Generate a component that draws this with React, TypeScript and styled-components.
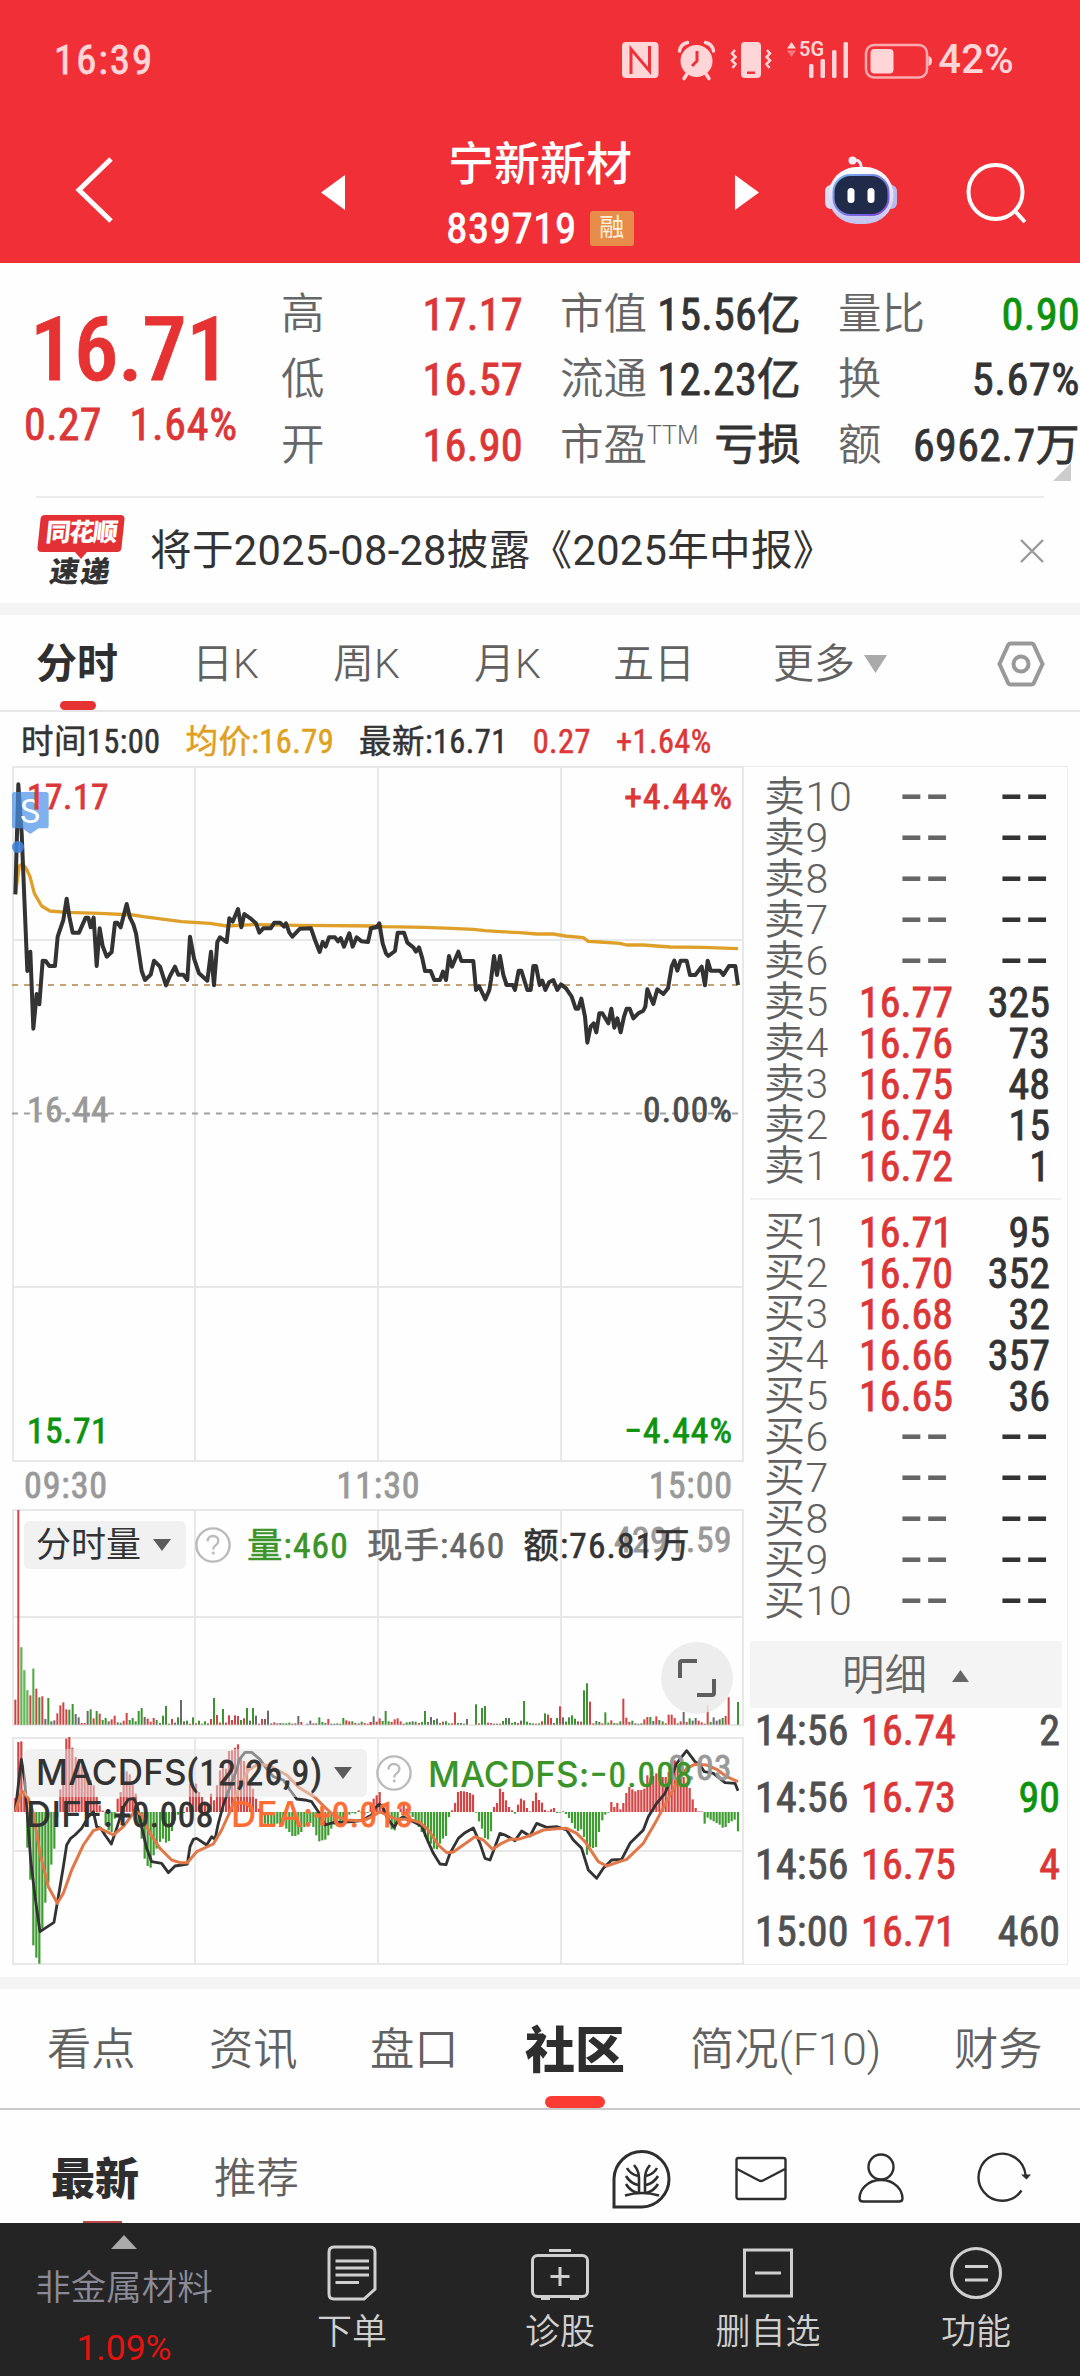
import React from 'react';
import styled, { createGlobalStyle, css } from 'styled-components';

const RED = '#dc3636';
const GREEN = '#0d930d';
const INK = '#333333';
const GREY = '#666666';

const GlobalStyle = createGlobalStyle`
  * { box-sizing: border-box; }
  body { margin: 0; background: #fff; }
`;

const Screen = styled.div`
  width: 1080px;
  height: 2376px;
  overflow: hidden;
  display: flex;
  flex-direction: column;
  background: #fefefe;
  color: ${INK};
  font-family: Roboto, 'Noto Sans CJK SC', sans-serif;
  font-size: 42px;
  line-height: 1;
  white-space: nowrap;
`;

const din = css`
  font-family: Roboto, 'Noto Sans CJK SC', sans-serif;
  font-stretch: 75%;
  font-weight: 400;
  -webkit-text-stroke: 0.8px currentColor;
`;

const Num = styled.span<{ $size: number; $color?: string; $track?: number; $weight?: number }>`
  ${din}
  font-size: ${p => p.$size}px;
  color: ${p => p.$color ?? 'inherit'};
  letter-spacing: ${p => p.$track ?? 0.2}px;
  font-weight: ${p => p.$weight ?? 400};
`;

/* ---------- header ---------- */
const Header = styled.header`
  height: 263px;
  background: #f12f37;
  color: #fff;
`;
const StatusBar = styled.div`
  height: 117px;
  padding: 3px 66px 0 54px;
  display: flex;
  align-items: center;
  justify-content: space-between;
  color: #ffd6d7;
`;
const StatusIcons = styled.div`
  display: flex;
  align-items: center;
  gap: 4px;
`;
const BatteryText = styled.span`
  font-size: 40px;
  font-weight: 500;
  letter-spacing: 0.3px;
`;
const TitleBar = styled.div`
  height: 146px;
  display: grid;
  grid-template-columns: 321px 24px 390px 24px 66px 72px 183px;
`;
const BackCell = styled.div`padding: 40px 0 0 74px;`;
const ArrowCell = styled.div`padding-top: 58px;`;
const RobotCell = styled.div`padding-top: 39px;`;
const SearchCell = styled.div`padding: 43px 0 0 67px;`;
const Stock = styled.div`
  display: flex;
  flex-direction: column;
  align-items: center;
  padding-top: 22px;
`;
const StockName = styled.div`
  font-size: 46px;
  line-height: 50px;
  font-weight: 500;
`;
const StockCode = styled.div`
  display: flex;
  align-items: center;
  gap: 13px;
  height: 36px;
  margin-top: 21px;
`;
const MarginTag = styled.span`
  width: 44px;
  height: 35px;
  border-radius: 3px;
  background: #e88d49;
  color: #fff0dc;
  font-size: 25px;
  line-height: 34px;
  text-align: center;
`;

/* ---------- quote ---------- */
const Quote = styled.section`
  height: 233px;
  display: grid;
  grid-template-columns: 281px 242px 37px 241px 37px 242px;
`;
const Last = styled.div`
  padding-top: 42px;
`;
const LastPrice = styled.div`
  height: 88px;
  padding-left: 30px;
  display: flex;
  align-items: center;
`;
const Change = styled.div`
  display: flex;
  gap: 28px;
  padding: 10px 0 0 24px;
`;
const Stats = styled.div`
  padding-top: 19px;
`;
const Stat = styled.div`
  height: 65.5px;
  display: flex;
  align-items: center;
  justify-content: space-between;
`;
const StatLabel = styled.span`
  font-size: 43.5px;
  color: ${GREY};
  font-weight: 350;
  line-height: 60px;
  sup { font-size: 25px; line-height: 1; vertical-align: 16px; font-weight: 300; }
`;
const Spacer = styled.div``;
const LastStats = styled(Stats)`
  position: relative;
`;
const Corner = styled.svg`
  position: absolute;
  right: 9px;
  top: 200px;
`;

/* ---------- news ---------- */
const News = styled.section`
  height: 107px;
  margin: 0 36px;
  border-top: 2px solid #ebebeb;
  display: flex;
  align-items: center;
`;
const NewsLogo = styled.div`
  width: 90px;
  display: flex;
  flex-direction: column;
  align-items: center;
`;
const LogoTop = styled.div`
  width: 84px;
  height: 37px;
  border-radius: 4px;
  background: #e33034;
  transform: skewX(-6deg);
  color: #fff;
  font-size: 25px;
  font-weight: 900;
  line-height: 36px;
  text-align: center;
  letter-spacing: -1.5px;
`;
const LogoBottom = styled.div`
  transform: skewX(-9deg);
  font-size: 29px;
  font-weight: 900;
  line-height: 28px;
  margin-top: -1px;
  letter-spacing: 2px;
`;
const NewsText = styled.div`
  flex: 1;
  padding-left: 24px;
  font-size: 41.6px;
  letter-spacing: 0.3px;
  line-height: 50px;
`;
const Band = styled.div`
  height: 12px;
  flex: none;
  background: #f4f4f4;
`;

/* ---------- period tabs ---------- */
const Periods = styled.nav`
  height: 97px;
  padding: 0 35px 0 36px;
  border-bottom: 2px solid #e6e6e6;
  display: grid;
  grid-template-columns: 156px 141px 141px 139px 160px 224px 1fr;
  align-items: stretch;
`;
const Period = styled.div<{ $on?: boolean }>`
  display: flex;
  align-items: center;
  gap: 9px;
  font-size: 41px;
  font-weight: ${p => (p.$on ? 700 : 350)};
  color: ${p => (p.$on ? '#2f2f2f' : '#616161')};
  padding-top: 4px;
  position: relative;
  svg { position: relative; top: -1px; }
`;
const PeriodMark = styled.i`
  position: absolute;
  left: 24px;
  bottom: 0;
  width: 36px;
  height: 9px;
  border-radius: 5px;
  background: #e53232;
`;
const Info = styled.div`
  height: 54px;
  padding: 6px 0 0 21px;
  display: flex;
  align-items: center;
  gap: 25px;
  ${din}
  -webkit-text-stroke: 0.5px currentColor;
  font-size: 32.5px;
  letter-spacing: 0.4px;
`;
const InfoItem = styled.span<{ $color?: string }>`
  color: ${p => p.$color ?? INK};
  line-height: 44px;
`;

/* ---------- market area ---------- */
const Market = styled.section`
  height: 1211px;
  display: flex;
`;
const Charts = styled.div`
  width: 744px;
  display: flex;
  flex-direction: column;
`;
const ChartBox = styled.div<{ $h: number }>`
  position: relative;
  height: ${p => p.$h}px;
  svg { display: block; }
`;
const Tag = styled.span<{ $x?: number; $r?: number; $y: number; $color: string; $size?: number }>`
  position: absolute;
  ${p => (p.$x !== undefined ? `left: ${p.$x}px;` : `right: ${p.$r}px;`)}
  top: ${p => p.$y}px;
  ${din}
  font-size: ${p => p.$size ?? 35.5}px;
  line-height: 36px;
  color: ${p => p.$color};
  letter-spacing: 0.5px;
`;
const PercentTag = styled(Tag)`
  letter-spacing: 1.1px;
`;
const FlagLetter = styled(Tag)`
  font-stretch: 100%;
  -webkit-text-stroke: 0;
`;
const Axis = styled.div`
  height: 47px;
  padding: 0 11px 0 24px;
  display: flex;
  align-items: center;
  justify-content: space-between;
`;
const Legend = styled.div<{ $y: number }>`
  position: absolute;
  left: 24px;
  top: ${p => p.$y}px;
  height: 48px;
  display: flex;
  align-items: center;
`;
const Picker = styled.div<{ $w: number }>`
  width: ${p => p.$w}px;
  height: 48px;
  margin-right: 9px;
  padding: 0 15px 0 12px;
  border-radius: 6px;
  background: rgba(227, 227, 227, 0.5);
  display: flex;
  align-items: center;
  justify-content: space-between;
  font-size: 35px;
  line-height: 51px;
`;
const LegendItem = styled.span<{ $ml: number; $color: string }>`
  margin-left: ${p => p.$ml}px;
  padding-top: 2px;
  color: ${p => p.$color};
  ${din}
  -webkit-text-stroke: 0.6px currentColor;
  font-size: 35.5px;
  line-height: 46px;
  letter-spacing: 1.1px;
`;
const Wide = styled.span`
  font-family: Inter, sans-serif;
  font-stretch: 100%;
  font-weight: 450;
  -webkit-text-stroke: 0;
  font-size: 35px;
  letter-spacing: 0.2px;
`;
const Expand = styled.div`
  position: absolute;
  left: 661px;
  top: 133px;
  width: 72px;
  height: 72px;
  border-radius: 50%;
  background: rgba(234, 234, 234, 0.88);
  display: flex;
  align-items: center;
  justify-content: center;
`;

/* ---------- order book ---------- */
const Book = styled.aside`
  width: 324px;
  height: 1199px;
  border: 1px solid #ececec;
  border-left: 0;
  padding-top: 9px;
`;
const Level = styled.div`
  height: 41px;
  padding: 0 17px 0 20px;
  display: grid;
  grid-template-columns: 95px 91px 1fr;
  align-items: center;
`;
const LevelName = styled.span`
  font-size: 41px;
  line-height: 43px;
  font-weight: 350;
  letter-spacing: 0.6px;
  color: #616161;
`;
const LevelValue = styled.span<{ $color: string }>`
  ${din}
  font-size: 42px;
  line-height: 41px;
  text-align: right;
  color: ${p => p.$color};
`;
const Dashes = styled(LevelValue)`
  font-family: Inter, sans-serif;
  font-size: 56px;
  font-stretch: 100%;
  -webkit-text-stroke: 0;
  position: relative;
  top: -3px;
`;
const BookRule = styled.div`
  height: 2px;
  margin: 12px 5px 11px 6px;
  background: #f1f1f1;
`;
const DetailHead = styled.div`
  height: 67px;
  margin: 20px 5px 0 6px;
  padding: 3px 0 0 92px;
  background: #f4f4f4;
  color: ${GREY};
  display: flex;
  align-items: center;
  gap: 25px;
  font-size: 42.5px;
  line-height: 60px;
  font-weight: 350;
`;
const Trade = styled.div`
  height: 67px;
  padding: 0 7px 22px 11px;
  display: grid;
  grid-template-columns: 106px 100px 1fr;
  align-items: center;
`;

/* ---------- content tabs ---------- */
const Tabs = styled.nav`
  height: 121px;
  padding-left: 47px;
  border-bottom: 2px solid #cacaca;
  display: grid;
  grid-template-columns: 162px 161px 155px 165px 264px 1fr;
`;
const TabItem = styled.div<{ $on?: boolean }>`
  position: relative;
  display: flex;
  align-items: center;
  padding-top: 4px;
  font-size: ${p => (p.$on ? 50 : 44.3)}px;
  font-weight: ${p => (p.$on ? 900 : 350)};
  color: ${p => (p.$on ? '#2e2e2e' : '#616161')};
`;
const TabMark = styled.i`
  position: absolute;
  left: 20px;
  bottom: 0;
  width: 60px;
  height: 12px;
  border-radius: 6px;
  background: #fb3c32;
`;
const Feed = styled.div`
  height: 113px;
  padding: 0 46px 0 51px;
  display: flex;
  justify-content: space-between;
`;
const FeedTabs = styled.div`
  display: flex;
  gap: 75px;
`;
const FeedTab = styled.div<{ $on?: boolean }>`
  position: relative;
  display: flex;
  align-items: center;
  padding-top: 26px;
  font-size: ${p => (p.$on ? 44 : 42.5)}px;
  font-weight: ${p => (p.$on ? 900 : 350)};
  color: ${p => (p.$on ? '#2e2e2e' : '#616161')};
`;
const FeedMark = styled.i`
  position: absolute;
  left: 32px;
  bottom: 0;
  width: 39px;
  height: 2px;
  background: #b94a4a;
`;
const FeedIcons = styled.div`
  display: flex;
  gap: 61px;
  padding-top: 37px;
`;

/* ---------- bottom bar ---------- */
const Bottom = styled.footer`
  height: 153px;
  background: #242424;
  display: grid;
  grid-template-columns: 248px 208px 208px 208px 208px;
`;
const Sector = styled.div`
  display: flex;
  flex-direction: column;
  align-items: center;
  padding-top: 12px;
  color: #8b8b98;
  font-size: 35.5px;
`;
const SectorName = styled.div`
  margin-top: 15px;
  line-height: 48px;
  font-weight: 350;
`;
const SectorChange = styled.div`
  margin-top: 19px;
  line-height: 34px;
  font-size: 35.5px;
  color: #e3140f;
`;
const Action = styled.div`
  display: flex;
  flex-direction: column;
  align-items: center;
  padding-top: 22px;
  color: #d0d0d0;
  font-size: 35px;
  font-weight: 350;
`;
const ActionText = styled.span`
  line-height: 48px;
  margin-top: 8px;
`;

/* ---------- data ---------- */
const SECOND = 1110;
type P = string;
const shift = (s: P) =>
  s.trim().split(/\s+/).map(t => {
    const [x, y] = t.split(',').map(Number);
    return `${x + SECOND},${y}`;
  }).join(' ');

const PRICE =
  '46,463 55,133 65,280 82,693 91,635 100,866 110,762 118,793 128,662 137,663 148,678 165,678 173,590 190,540 200,476 208,530 218,578 237,578 257,533 265,533 272,562 281,533 290,678 299,565 308,618 320,650 335,636 345,548 352,548 362,562 380,492 390,533 400,553 408,580 425,693 435,720 452,704 462,662 480,680 498,736 510,708 525,680 535,704 550,704 562,720 570,590 582,655 597,700 622,722 633,635 642,736 652,606 660,592 680,606 688,535 698,545 714,507 724,562 733,522 751,535 768,550 778,578 790,565 812,565 823,548 840,548 852,560 858,550 868,578 877,590 900,566 933,565 945,600 959,636 968,606 977,620 987,592 1005,592 1014,604 1022,594 1032,620 1048,580 1058,620 1070,592 1085,604 1104,606 1113,565 1130,560 ' +
  shift('2,565 20,562 28,550 38,610 48,640 55,648 75,633 83,578 102,578 112,608 130,622 138,635 147,622 157,655 165,693 182,693 193,720 210,720 219,695 228,720 237,648 246,680 265,635 274,663 310,663 318,750 327,738 346,778 358,750 363,720 372,648 381,705 390,648 400,705 410,735 428,735 435,750 446,692 454,692 472,750 482,750 490,678 498,678 509,735 517,722 526,750 537,727 550,720 562,750 573,733 588,745 605,770 617,806 625,806 634,776 645,830 652,908 662,860 671,850 679,877 688,820 697,820 715,850 724,806 733,863 742,835 752,877 762,830 770,806 779,806 790,835 805,820 820,812 826,800 832,748 850,792 862,748 880,762 894,745 905,680 913,662 922,692 932,662 950,662 960,705 976,705 995,680 1005,736 1013,662 1022,692 1050,692 1060,705 1077,678 1096,678 1104,735');
const AVERAGE =
  '46,463 58,378 68,372 78,384 90,410 103,460 125,498 150,513 200,517 300,520 400,525 430,530 545,545 630,550 680,558 760,554 900,556 1130,558 ' +
  shift('40,560 165,562 245,565 310,568 345,572 390,575 450,578 500,582 550,582 585,588 640,593 655,604 690,606 750,610 770,615 820,615 900,621 1000,622 1104,626');
const DIFF =
  '46,272 64,118 74,180 82,285 92,420 105,530 120,635 162,607 175,530 190,440 200,375 212,355 225,345 245,325 265,290 280,275 290,320 302,325 315,345 334,372 350,325 370,262 385,238 402,236 412,260 425,320 440,385 455,425 485,430 505,458 525,438 562,432 570,380 580,358 590,355 620,375 635,350 645,358 655,310 670,255 690,200 710,150 718,118 735,97 755,97 780,118 795,140 820,170 850,180 870,210 890,237 915,240 935,245 955,275 975,315 1000,308 1060,305 1090,300 1105,290 ' +
  shift('5,285 15,265 28,252 40,265 55,300 73,322 85,300 100,290 115,300 130,305 155,318 170,355 190,400 210,432 228,434 240,400 265,355 285,338 310,324 330,370 345,415 360,420 375,380 390,340 405,345 435,362 455,333 480,348 500,310 530,322 560,320 590,330 610,360 635,385 655,450 680,475 700,445 725,420 755,418 780,370 820,330 835,290 860,250 885,220 905,170 920,130 950,92 975,125 990,135 1003,155 1030,160 1065,188 1095,190 1104,212');
const DEA =
  '46,272 66,212 85,235 100,280 120,400 145,500 172,550 190,520 215,450 250,375 280,332 300,325 340,345 370,320 405,273 425,285 450,340 480,385 515,420 540,428 562,428 590,395 640,372 665,330 690,275 715,210 745,150 775,132 810,138 860,165 900,205 945,232 975,262 1000,285 1040,300 1080,302 1100,298 ' +
  shift('5,290 30,276 50,285 80,298 120,298 150,308 175,330 205,375 230,398 250,396 280,375 315,350 340,360 368,388 395,370 420,358 445,358 485,345 520,330 560,326 590,325 620,340 645,365 665,395 685,425 710,438 740,428 770,418 820,370 855,310 895,235 925,180 950,145 975,133 1010,135 1040,148 1070,170 1104,185');

const VOL_A =
  '46:75r 55:644r 64:232g 73:163g 82:103g 91:88r 100:168g 109:108r 118:82g 127:85r 136:17k 145:80g 154:10k 163:13k 172:34r 181:58r 190:67r 199:46r 208:45g 218:62g 227:32k 236:22k 245:5r 254:5r 263:41k 272:46g 281:19r 290:41g 299:33r 308:14g 317:20g 326:10k 335:16r 344:27r 353:7k 362:6g 371:12r 380:35r 389:14g 398:20g 407:10g 416:41g 425:50g 434:23k 443:18r 452:9r 461:20r 470:14g 480:5k 489:27g 498:56g 507:3g 516:17r 525:6k 534:22g 543:74k 552:10k 561:12g 570:3r 579:22g 588:4r 597:12g 606:3g 615:10g 624:4k 633:17r 642:80g 651:29r 660:6r 669:47g 678:6r 687:28r 696:14r 705:28r 714:26r 723:14g 732:19r 741:50g 750:12k 759:50g 768:27k 777:3r 786:17r 795:17k 804:42k 814:4k 823:7r 832:4k 841:5k 850:4g 859:4g 868:6g 877:3r 886:4k 895:26k 904:8r 922:3k 931:12k 940:4r 949:4k 958:22g 967:8g 976:5k 985:17r 994:3k 1003:3k 1012:4k 1021:3g 1030:20g 1039:13r 1048:10r 1057:10g 1066:5r 1076:4k 1085:9g 1094:5r 1103:3r 1112:8r';
const VOL_B =
  '2:8r 11:25k 20:9r 29:19r 38:11g 47:41g 56:10g 65:8r 74:16r 83:19r 92:10r 101:3k 110:7g 119:8g 128:10k 137:9g 147:5r 156:8g 165:41g 174:8k 183:23k 192:14g 201:18k 210:5g 219:9r 228:10g 237:4g 246:4r 255:37r 264:5g 273:5k 282:3g 291:17k 318:61g 327:4r 336:50g 345:56g 354:6r 363:5r 372:3k 381:3k 390:3r 399:11g 408:20g 417:20k 426:5g 435:8g 444:5r 453:12k 462:71g 471:9g 480:5g 489:4k 498:3r 507:4g 516:10r 525:34g 534:30r 543:20r 552:5k 561:20g 570:55r 579:22k 588:9g 597:22g 606:28g 615:18g 624:10k 633:9r 642:103g 651:124g 660:69r 670:4r 679:11g 688:8k 697:4r 706:37g 715:6g 724:13r 733:5g 742:4k 751:10g 760:78r 769:21r 778:8r 787:12g 796:4k 805:3k 814:4g 823:16r 832:23r 841:23g 850:11k 859:25r 868:14k 878:10g 887:4r 896:30r 905:30r 914:20r 923:4k 932:10r 941:38k 950:8r 959:19g 968:12k 977:20k 986:12r 995:7r 1004:3k 1013:58r 1022:8g 1031:22k 1040:12k 1049:16k 1058:20g 1067:26r 1076:82r 1104:68g';
const HIST_A =
  '46:42 55:210 64:212 73:55 82:-107 91:-203 100:-400 109:-437 118:-455 127:-350 136:-272 145:-212 154:-158 163:-110 172:-15 181:68 190:100 199:220 208:225 217:193 227:165 236:150 245:140 254:138 263:115 272:95 281:80 290:45 299:20 308:4 317:-40 326:-55 335:-60 344:-20 353:40 362:60 371:85 380:122 389:113 398:85 407:55 416:-35 425:-80 434:-140 443:-162 452:-167 461:-130 470:-110 480:-90 489:-80 498:-92 507:-87 516:-57 525:-25 534:-8 543:-3 552:-3 561:15 570:85 579:80 588:85 597:60 606:45 615:28 624:20 633:55 642:35 651:80 660:125 669:140 678:130 687:183 696:185 705:193 714:203 723:165 732:153 741:140 750:100 759:70 768:40 777:10 786:-15 795:-35 804:-40 814:-40 823:-38 832:-35 841:-38 850:-40 859:-50 868:-60 877:-72 886:-72 895:-68 904:-60 913:-45 922:-38 931:-33 940:-45 949:-70 958:-88 967:-85 976:-83 985:-70 994:-50 1003:-38 1012:-28 1021:-32 1030:-30 1039:-20 1048:-8 1057:-3 1066:-5 1076:5 1085:-3 1094:-8 1103:-3';
const HIST_B =
  '2:25 11:40 20:50 29:60 38:25 47:-10 56:-30 65:-52 74:-55 83:-25 92:10 101:25 110:10 119:-5 128:-15 137:-25 146:-45 155:-60 165:-75 174:-90 183:-95 192:-110 201:-112 210:-95 219:-80 228:-72 237:-15 246:5 255:27 264:60 273:63 282:62 291:60 300:57 309:52 318:-2 327:-28 336:-50 345:-78 354:-82 363:-58 372:15 381:27 390:70 399:60 408:35 417:15 426:5 435:-5 444:22 453:40 462:35 471:12 480:2 489:33 498:58 507:36 516:28 525:6 534:2 543:8 552:12 561:-3 570:-2 579:2 588:-6 597:-18 606:-33 615:-50 624:-57 633:-52 642:-75 651:-128 660:-105 669:-108 678:-105 687:-60 697:-25 706:-8 715:-2 724:30 733:15 742:27 751:8 760:27 769:57 778:75 787:68 796:62 805:66 814:66 823:70 832:110 841:103 850:108 859:116 868:118 878:105 887:105 896:120 905:140 914:155 923:140 932:112 941:105 950:88 959:72 968:38 977:12 986:2 995:2 1004:-35 1013:-17 1022:-23 1031:-28 1040:-33 1049:-38 1058:-47 1067:-45 1076:-33 1085:-28 1094:-23 1104:-58';

interface Bar { x: number; v: number; c: string }
const parseBars = (s: string, dx: number): Bar[] =>
  s.split(' ').map(t => {
    const [x, r] = t.split(':');
    return { x: Number(x) + dx, v: parseFloat(r), c: r.slice(-1) };
  });
const VOLUME = [...parseBars(VOL_A, 0), ...parseBars(VOL_B, SECOND)];
const HISTOGRAM = [...parseBars(HIST_A, 0), ...parseBars(HIST_B, SECOND)];
const BAR_COLORS: Record<string, string> = { r: '#cf4444', g: '#3b9430', k: '#6a6a6a' };

const sells: [string, string?, string?][] = [
  ['卖10'], ['卖9'], ['卖8'], ['卖7'], ['卖6'],
  ['卖5', '16.77', '325'], ['卖4', '16.76', '73'], ['卖3', '16.75', '48'], ['卖2', '16.74', '15'], ['卖1', '16.72', '1'],
];
const buys: [string, string?, string?][] = [
  ['买1', '16.71', '95'], ['买2', '16.70', '352'], ['买3', '16.68', '32'], ['买4', '16.66', '357'], ['买5', '16.65', '36'],
  ['买6'], ['买7'], ['买8'], ['买9'], ['买10'],
];
const trades: [string, string, string, string][] = [
  ['14:56', '16.74', '2', '#505050'],
  ['14:56', '16.73', '90', GREEN],
  ['14:56', '16.75', '4', RED],
  ['15:00', '16.71', '460', '#505050'],
];

/* ---------- pieces ---------- */
const Triangle = ({ w, h, dir, color }: { w: number; h: number; dir: 'up' | 'down' | 'left' | 'right'; color: string }) => {
  const pts = {
    up: `0,${h} ${w},${h} ${w / 2},0`,
    down: `0,0 ${w},0 ${w / 2},${h}`,
    left: `${w},0 ${w},${h} 0,${h / 2}`,
    right: `0,0 0,${h} ${w},${h / 2}`,
  }[dir];
  return <svg width={w} height={h}><polygon points={pts} fill={color} /></svg>;
};

const Help = () => (
  <svg width="36" height="36" viewBox="0 0 36 36" fill="none" stroke="#bbb" strokeWidth="2.4">
    <circle cx="18" cy="18" r="16.6" />
    <path d="M12.6 14.4c0-3.4 2.3-5.4 5.4-5.4s5.4 2 5.4 4.8c0 2.4-1.4 3.6-3 4.8-1.5 1.1-2.2 2-2.2 3.8" />
    <circle cx="18.2" cy="26" r="1.1" fill="#bbb" strokeWidth="1" />
  </svg>
);

const Grid = ({ h, mids }: { h: number; mids: number[] }) => (
  <g stroke="#e8e8e8" strokeWidth="2" fill="none">
    <rect x="13" y="1" width="730" height={h - 2} />
    <path d={`M195 0V${h}M378 0V${h}M561 0V${h}`} />
    {mids.map(y => <path key={y} d={`M12 ${y}H744`} />)}
  </g>
);

const PriceChart = () => (
  <ChartBox $h={696}>
    <svg width="744" height="696">
      <Grid h={696} mids={[174, 521]} />
      <path d="M12 219H740" stroke="#c3a374" strokeWidth="2" strokeDasharray="6 6" />
      <path d="M12 347.5H740" stroke="#a0a0a0" strokeWidth="2" strokeDasharray="6 6" />
      <g transform="translate(0 -26) scale(0.33333)" fill="none" strokeLinejoin="round">
        <polyline points={AVERAGE} stroke="#dfa029" strokeWidth="10" />
        <polyline points={PRICE} stroke="#333" strokeWidth="12" />
        <circle cx="54" cy="321" r="18" fill="#3f83dc" fillOpacity=".9" />
        <path d="M44 156H138q8 0 8 8V257q0 8-8 8H116L91 282 66 265H44q-8 0-8-8V164q0-8 8-8z" fill="#4a90e8" fillOpacity=".7" />
      </g>
    </svg>
    <FlagLetter $x={20} $y={27} $color="#fff" $size={34}>S</FlagLetter>
    <Tag $x={27} $y={13} $color={RED}>17.17</Tag>
    <PercentTag $r={11} $y={13} $color={RED}>+4.44%</PercentTag>
    <Tag $x={27} $y={326} $color="#999">16.44</Tag>
    <PercentTag $r={11} $y={326} $color="#4c4c4c">0.00%</PercentTag>
    <Tag $x={27} $y={647} $color={GREEN}>15.71</Tag>
    <PercentTag $r={11} $y={647} $color={GREEN}>−4.44%</PercentTag>
  </ChartBox>
);

const VolumeChart = () => (
  <ChartBox $h={218}>
    <svg width="744" height="218">
      <Grid h={217} mids={[108]} />
      <g transform="translate(0 -109) scale(0.33333)">
        {VOLUME.map(b => <rect key={b.x} x={b.x - 3} y={974 - b.v} width="6" height={b.v} fill={BAR_COLORS[b.c]} />)}
        <path d="M60 742h7v232h-7zM69 811h7v163h-7zM78 871h7v103h-7zM96 805h5v169h-5z" fill="#8fd780" fillOpacity=".5" />
      </g>
    </svg>
    <Tag $r={12} $y={13} $color="#999">4291.59</Tag>
    <Legend $y={12}>
      <Picker $w={162}>分时量<Triangle w={18} h={12} dir="down" color="#5c5c5c" /></Picker>
      <Help />
      <LegendItem $ml={16} $color="#3a9428">量:460</LegendItem>
      <LegendItem $ml={18} $color="#666">现手:460</LegendItem>
      <LegendItem $ml={18} $color="#333">额:76.81万</LegendItem>
    </Legend>
    <Expand>
      <svg width="38" height="38" fill="none" stroke="#5e5e5e" strokeWidth="4">
        <path d="M2 19V4q0-2 2-2H19M19 36H34q2 0 2-2V20" />
      </svg>
    </Expand>
  </ChartBox>
);

const MacdChart = () => (
  <ChartBox $h={228}>
    <svg width="744" height="228">
      <Grid h={228} mids={[114]} />
      <g transform="translate(0 -17) scale(0.33333)" fill="none" strokeLinejoin="round">
        {HISTOGRAM.map(b => (
          <rect key={b.x} x={b.x - 3.3} y={b.v > 0 ? 276 - b.v : 276} width="6.6" height={Math.abs(b.v)} fill={b.v > 0 ? '#d64545' : '#3f9c31'} />
        ))}
        <polyline points={DIFF} stroke="#333" strokeWidth="8.5" />
        <polyline points={DEA} stroke="#e27748" strokeWidth="9" />
      </g>
    </svg>
    <Tag $r={12} $y={13} $color="#999">0.03</Tag>
    <Tag $x={26} $y={59} $color="#333"><Wide>DIFF:</Wide>+0.008</Tag>
    <Tag $x={231} $y={59} $color="#ff6d35"><Wide>DEA:</Wide>+0.013</Tag>
    <Legend $y={12}>
      <Picker $w={343}><Num $size={35.5} $track={1.4}><Wide>MACDFS</Wide>(12,26,9)</Num><Triangle w={18} h={12} dir="down" color="#5c5c5c" /></Picker>
      <Help />
      <LegendItem $ml={16} $color="#3a9428"><Wide>MACDFS:</Wide>−0.008</LegendItem>
    </Legend>
  </ChartBox>
);

const BookLevel = ({ row }: { row: [string, string?, string?] }) => (
  <Level>
    <LevelName>{row[0]}</LevelName>
    {row[1] ? <LevelValue $color={RED}>{row[1]}</LevelValue> : <Dashes $color="#666">--</Dashes>}
    {row[2] ? <LevelValue $color={INK}>{row[2]}</LevelValue> : <Dashes $color={INK}>--</Dashes>}
  </Level>
);

const StatusGlyphs = () => (
  <svg width="314" height="58" viewBox="616 31 314 58" fill="#ffd6d7">
    <rect x="618" y="42" width="36.500" height="36" rx="4" />
    <path d="M627 74V49L645.500 71V46" fill="none" stroke="#f12f37" strokeWidth="3" />
    <circle cx="692.500" cy="61" r="16" />
    <path d="M675.500 51q1-7 8-8.500M709.500 51q-1-7-8-8.500M683 74l-3 4.500M702 74l3 4.500" fill="none" stroke="#ffd6d7" strokeWidth="3.500" strokeLinecap="round" />
    <path d="M693 51v10l-5 5" fill="none" stroke="#f12f37" strokeWidth="3" />
    <rect x="737" y="42" width="20" height="36" rx="4" />
    <rect x="743" y="71.500" width="8" height="2.500" fill="#f12f37" />
    <path d="M731 50l-3 3.500 3.500 3.500-3.500 3.500 3.500 3.500-3 4M763 50l3 3.500-3.500 3.500 3.500 3.500-3.500 3.500 3 4" fill="none" stroke="#ffd6d7" strokeWidth="2.500" />
    <path d="M783 48.500l4.500-6.500 4.500 6.500z" />
    <path d="M783 50.500h9l-4.500 6.500z" opacity=".45" />
    <text x="795" y="56" fontSize="20" fontFamily="Roboto" fontWeight="600">5G</text>
    <rect x="805" y="64" width="4.500" height="14" rx="1.500" />
    <rect x="816.500" y="59" width="4.500" height="19" rx="1.500" />
    <rect x="828" y="50" width="4.500" height="28" rx="1.500" />
    <rect x="839.500" y="42" width="4.500" height="36" rx="1.500" />
    <rect x="862" y="45" width="61" height="32.500" rx="8" fill="none" stroke="#f9abae" strokeWidth="2.500" />
    <rect x="866.500" y="49" width="23" height="24.500" rx="4" />
    <path d="M924.500 56q3.500 1 3.500 5t-3.500 5z" />
  </svg>
);

const Robot = () => (
  <svg width="72" height="70" viewBox="0 0 72 70">
    <defs>
      <linearGradient id="shell" x1="0" y1="0" x2="0" y2="1"><stop offset="0" stopColor="#fff" /><stop offset="1" stopColor="#c3c3ef" /></linearGradient>
      <linearGradient id="rim" x1="0" y1="0" x2="1" y2="1"><stop offset="0" stopColor="#77b7ee" /><stop offset="1" stopColor="#7a45d8" /></linearGradient>
    </defs>
    <path d="M36 14q1-9-5-10" fill="none" stroke="#e9e6f5" strokeWidth="3" />
    <circle cx="27.500" cy="4.500" r="4" fill="#f4eff6" />
    <rect x="0" y="29" width="12" height="24" rx="6" fill="#dcdcf5" />
    <rect x="60" y="29" width="12" height="24" rx="6" fill="#b9b9ee" />
    <rect x="3.500" y="11" width="65" height="57" rx="28" fill="url(#shell)" />
    <rect x="8.500" y="19" width="55" height="40" rx="17" fill="#202b4a" stroke="url(#rim)" strokeWidth="2" />
    <rect x="22.500" y="32" width="7" height="15" rx="3.500" fill="#fff" />
    <rect x="42.500" y="32" width="7" height="15" rx="3.500" fill="#fff" />
  </svg>
);

export default function App() {
  return (
    <Screen>
      <GlobalStyle />
      <Header>
        <StatusBar>
          <Num $size={41} $track={1.9}>16:39</Num>
          <StatusIcons>
            <StatusGlyphs />
            <BatteryText>42%</BatteryText>
          </StatusIcons>
        </StatusBar>
        <TitleBar>
          <BackCell><svg width="42" height="66" fill="none" stroke="#fff" strokeWidth="5"><path d="M37 2L5 33 37 64" /></svg></BackCell>
          <ArrowCell><Triangle w={24} h={35} dir="left" color="#fff" /></ArrowCell>
          <Stock>
            <StockName>宁新新材</StockName>
            <StockCode><Num $size={43} $track={0.5}>839719</Num><MarginTag>融</MarginTag></StockCode>
          </Stock>
          <ArrowCell><Triangle w={24} h={35} dir="right" color="#fff" /></ArrowCell>
          <Spacer />
          <RobotCell><Robot /></RobotCell>
          <SearchCell>
            <svg width="64" height="64" fill="none" stroke="#fff" strokeWidth="4"><circle cx="31.500" cy="32" r="27" /><path d="M50 50l11 12" /></svg>
          </SearchCell>
        </TitleBar>
      </Header>

      <Quote>
        <Last>
          <LastPrice><Num $size={89} $color="#e63232" $track={-0.5} $weight={500}>16.71</Num></LastPrice>
          <Change><Num $size={44} $color={RED}>0.27</Num><Num $size={44} $color={RED} $track={0.7}>1.64%</Num></Change>
        </Last>
        <Stats>
          <Stat><StatLabel>高</StatLabel><Num $size={44.5} $color={RED}>17.17</Num></Stat>
          <Stat><StatLabel>低</StatLabel><Num $size={44.5} $color={RED}>16.57</Num></Stat>
          <Stat><StatLabel>开</StatLabel><Num $size={44.5} $color={RED}>16.90</Num></Stat>
        </Stats>
        <Spacer />
        <Stats>
          <Stat><StatLabel>市值</StatLabel><Num $size={44}>15.56亿</Num></Stat>
          <Stat><StatLabel>流通</StatLabel><Num $size={44}>12.23亿</Num></Stat>
          <Stat><StatLabel>市盈<sup>TTM</sup></StatLabel><Num $size={43}>亏损</Num></Stat>
        </Stats>
        <Spacer />
        <LastStats>
          <Stat><StatLabel>量比</StatLabel><Num $size={44.5} $color={GREEN}>0.90</Num></Stat>
          <Stat><StatLabel>换</StatLabel><Num $size={44.5} $track={0.5}>5.67%</Num></Stat>
          <Stat><StatLabel>额</StatLabel><Num $size={44} $track={0.4}>6962.7万</Num></Stat>
          <Corner width="18" height="18"><path d="M18 0V18H0z" fill="#ccc" /></Corner>
        </LastStats>
      </Quote>

      <News>
        <NewsLogo>
          <LogoTop>同花顺</LogoTop>
          <Triangle w={12} h={7} dir="down" color="#e33034" />
          <LogoBottom>速递</LogoBottom>
        </NewsLogo>
        <NewsText>将于2025-08-28披露《2025年中报》</NewsText>
        <svg width="24" height="24" stroke="#999" strokeWidth="2.4"><path d="M1 1L23 23M23 1L1 23" /></svg>
      </News>
      <Band />

      <Periods>
        <Period $on>分时<PeriodMark /></Period>
        <Period>日K</Period>
        <Period>周K</Period>
        <Period>月K</Period>
        <Period>五日</Period>
        <Period>更多<Triangle w={23} h={18} dir="down" color="#aaa" /></Period>
        <Period>
          <svg width="48" height="46" fill="none" stroke="#999" strokeWidth="4"><path d="M13.500 2.500h21q1.500 0 2.200 1.200L45.500 23 36.700 42.300q-.7 1.200-2.200 1.200h-21q-1.500 0-2.200-1.200L2.500 23 11.300 3.700q.7-1.200 2.200-1.200z" /><circle cx="24" cy="23" r="7.500" /></svg>
        </Period>
      </Periods>
      <Info>
        <InfoItem>时间15:00</InfoItem>
        <InfoItem $color="#dfa020">均价:16.79</InfoItem>
        <InfoItem>最新:16.71</InfoItem>
        <InfoItem $color={RED}>0.27</InfoItem>
        <InfoItem $color={RED}>+1.64%</InfoItem>
      </Info>

      <Market>
        <Charts>
          <PriceChart />
          <Axis>
            <Num $size={36} $color="#999" $track={0.9}>09:30</Num>
            <Num $size={36} $color="#999" $track={0.9}>11:30</Num>
            <Num $size={36} $color="#999" $track={0.9}>15:00</Num>
          </Axis>
          <VolumeChart />
          <ChartBox $h={10} />
          <MacdChart />
        </Charts>
        <Book>
          {sells.map(r => <BookLevel key={r[0]} row={r} />)}
          <BookRule />
          {buys.map(r => <BookLevel key={r[0]} row={r} />)}
          <DetailHead>明细<Triangle w={17} h={12} dir="up" color="#666" /></DetailHead>
          {trades.map(([t, p, v, c], i) => (
            <Trade key={i}>
              <Num $size={42} $color="#505050">{t}</Num>
              <Num $size={42} $color={RED}>{p}</Num>
              <LevelValue $color={c}>{v}</LevelValue>
            </Trade>
          ))}
        </Book>
      </Market>
      <Band />

      <Tabs>
        <TabItem>看点</TabItem>
        <TabItem>资讯</TabItem>
        <TabItem>盘口</TabItem>
        <TabItem $on>社区<TabMark /></TabItem>
        <TabItem>简况(F10)</TabItem>
        <TabItem>财务</TabItem>
      </Tabs>
      <Feed>
        <FeedTabs>
          <FeedTab $on>最新<FeedMark /></FeedTab>
          <FeedTab>推荐</FeedTab>
        </FeedTabs>
        <FeedIcons>
          <svg width="60" height="64" viewBox="2 0 60 64" fill="none" stroke="#2e2e2e" strokeWidth="3">
            <path d="M5 60V31.500A28 28 0 0 1 33 4.500 27.500 27.500 0 0 1 60 32 28 28 0 0 1 33 60z" />
            <path d="M30 47V31Q30 24 25 18M36 47V31Q36 24 41 18M16 48.500q17-5 34 0" strokeWidth="2.600" />
            <path d="M18 21q3 6 11 8M17 29q4 7 12 9M17 37q4 7 12 9M48 21q-3 6-11 8M49 29q-4 7-12 9M49 37q-4 7-12 9" strokeWidth="2.600" />
          </svg>
          <svg width="60" height="62" viewBox="-3 0 60 62" fill="none" stroke="#2e2e2e" strokeWidth="2.400">
            <rect x="1.500" y="11" width="49" height="41" rx="2" /><path d="M2 22L24 33.500q2 1 4 0L50 22" />
          </svg>
          <svg width="60" height="62" viewBox="-5 0 60 62" fill="none" stroke="#2e2e2e" strokeWidth="2.400">
            <circle cx="23" cy="20" r="12.500" /><path d="M23 33C9 33 1.500 43 1.500 51.500q0 3 3.500 3H41q3.500 0 3.500-3C44.500 43 37 33 23 33z" />
          </svg>
          <svg width="60" height="62" viewBox="-2 0 60 62" fill="none" stroke="#2e2e2e" strokeWidth="2.400">
            <path d="M49.500 28A23.500 23.500 0 1 0 45.500 43.500" /><path d="M45 27.500h10l-4.500 5z" fill="#2e2e2e" stroke="none" />
          </svg>
        </FeedIcons>
      </Feed>

      <Bottom>
        <Sector>
          <Triangle w={26} h={14} dir="up" color="#aaa" />
          <SectorName>非金属材料</SectorName>
          <SectorChange>1.09%</SectorChange>
        </Sector>
        <Action>
          <svg width="50" height="56" fill="none" stroke="#d0d0d0" strokeWidth="3"><path d="M7 2H43q5 0 5 5V44L37 54H7q-5 0-5-5V7q0-5 5-5z" /><path d="M8.500 16H42M8.500 23H42M8.500 30H42M8.500 37.500H32" /></svg>
          <ActionText>下单</ActionText>
        </Action>
        <Action>
          <svg width="60" height="56" fill="none" stroke="#d0d0d0" strokeWidth="3"><rect x="2.500" y="10.500" width="55" height="41" rx="5" /><path d="M19 5.500H41M11 53.500H20M40 53.500H49M30 22V41M20.500 31.500H39.500" /></svg>
          <ActionText>诊股</ActionText>
        </Action>
        <Action>
          <svg width="50" height="56" fill="none" stroke="#d0d0d0" strokeWidth="3"><rect x="1.500" y="5" width="47" height="46" /><path d="M12 28H38" /></svg>
          <ActionText>删自选</ActionText>
        </Action>
        <Action>
          <svg width="54" height="56" fill="none" stroke="#d0d0d0" strokeWidth="3"><circle cx="27" cy="28" r="24.500" /><path d="M16 21.500H39M16 35H39" /></svg>
          <ActionText>功能</ActionText>
        </Action>
      </Bottom>
    </Screen>
  );
}
